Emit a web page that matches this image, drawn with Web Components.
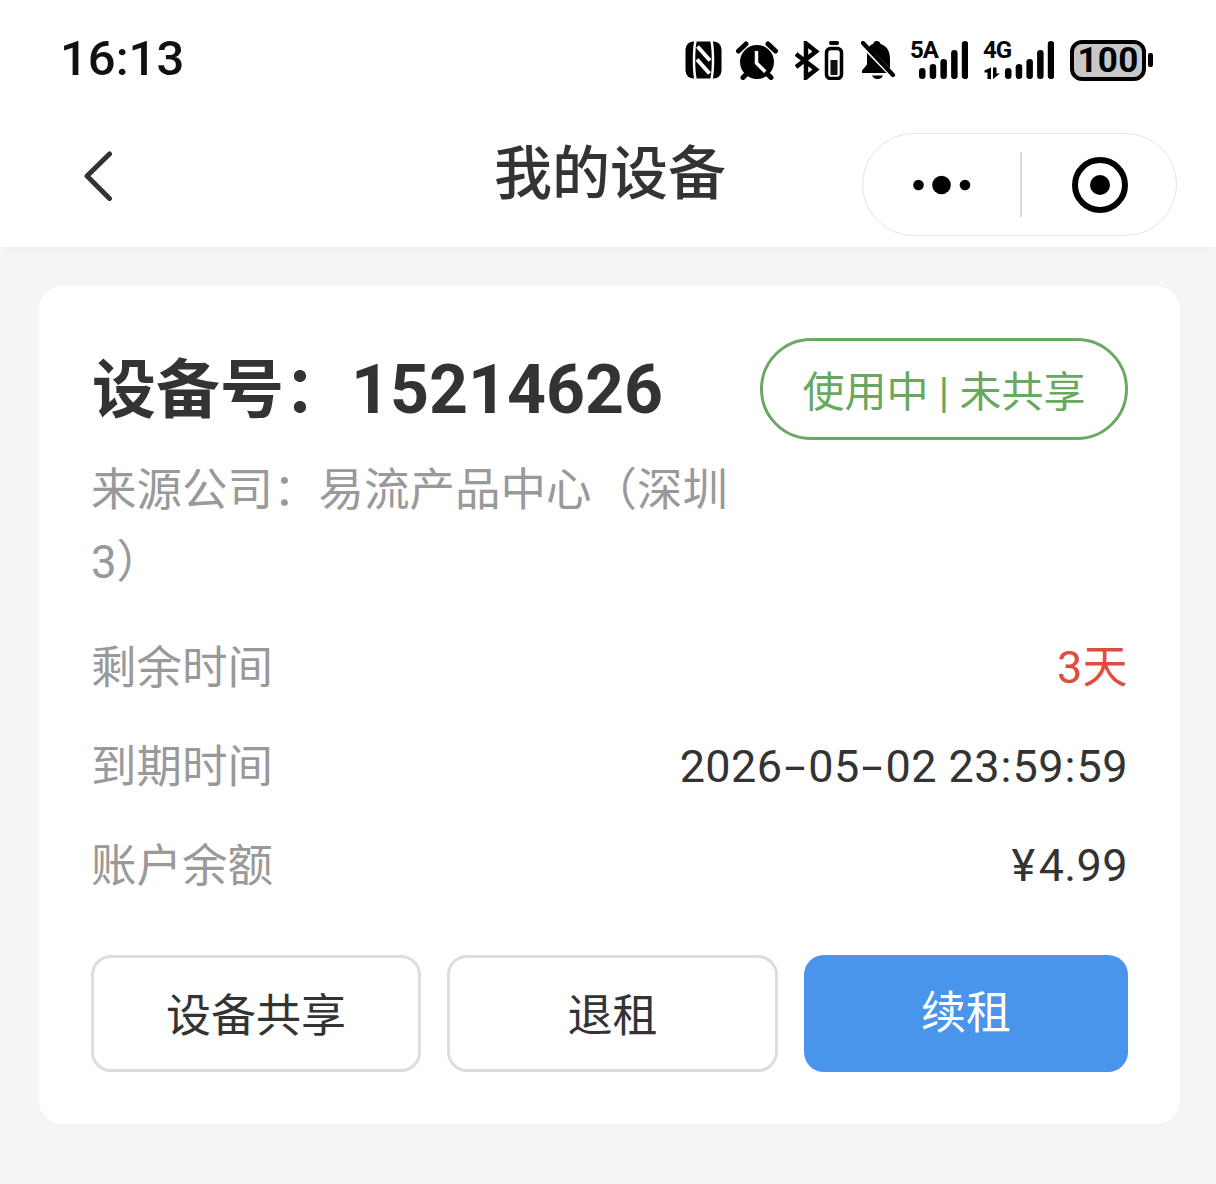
<!DOCTYPE html>
<html lang="zh">
<head>
<meta charset="utf-8">
<title>我的设备</title>
<style>
  html, body { margin: 0; background: #f5f5f5; }
  body { font-family: "Roboto", "Noto Sans CJK SC", sans-serif; color: #333; }
</style>
</head>
<body>
<status-bar time="16:13"></status-bar>
<nav-bar title="我的设备"></nav-bar>
<device-card number="15214626" state="使用中 | 未共享" source="来源公司：易流产品中心（深圳3）">
  <info-row label="剩余时间" value="3天" tone="red"></info-row>
  <info-row label="到期时间" value="2026-05-02 23:59:59"></info-row>
  <info-row label="账户余额" value="¥4.99"></info-row>
  <action-button slot="actions" style="width:330px">设备共享</action-button>
  <action-button slot="actions" style="width:331px">退租</action-button>
  <action-button slot="actions" style="width:324px" primary>续租</action-button>
</device-card>
<script>
customElements.define('signal-icon',
class extends HTMLElement {
  constructor() {
    super();
    this.attachShadow({ mode: 'open' });
  }
  connectedCallback() {
    // tag text above the bars, five bars growing to the right
    const tag = this.getAttribute('tag');
    const arrows = this.hasAttribute('arrows');
    const x = arrows ? 22 : 9;
    const w = arrows ? 71 : 58;
    const bars = [[27, 11], [23, 15], [18, 20], [9, 29], [0, 38]].map((b, i) =>
      `<rect x="${x + i * 10.7}" y="${b[0]}" width="6.500" height="${b[1]}" rx="3.200"/>`).join('');
    this.shadowRoot.innerHTML = `
      <style>
        :host { display: block; position: relative; flex: none; width: ${w}px; height: 38px; }
        svg { display: block; }
        span {
          position: absolute; left: 0; top: -5px;
          font: 700 24px/29px "Roboto", sans-serif;
          letter-spacing: -1px;
          color: #000;
        }
      </style>
      <svg width="${w}" height="38" viewBox="0 0 ${w} 38" fill="#000">
        ${bars}
        ${arrows ? '<path d="M4.500 38V31.500H1.500V29.500L8 26.500V38zM10 26.500H13.500V32.500H17L10 38z"/>' : ''}
      </svg>
      <span>${tag}</span>
    `;
  }
});

customElements.define('status-bar',
class extends HTMLElement {
  constructor() {
    super();
    this.attachShadow({ mode: 'open' });
  }
  connectedCallback() {
    this.shadowRoot.innerHTML = `
      <style>
        :host {
          display: flex;
          align-items: center;
          justify-content: space-between;
          height: 120px;
          box-sizing: border-box;
          padding: 0 63px 0 60px;
          background: #fff;
          color: #111;
        }
        .time { font: 500 49px/60px "Roboto", sans-serif; color: #111; margin-top: -3px; }
        .icons { display: flex; align-items: center; }
        svg { display: block; flex: none; }
        .batt {
          box-sizing: border-box;
          width: 76px; height: 41px;
          margin-left: 16px;
          border: 4px solid #000;
          border-radius: 12px;
          background: #c8c8c8;
          font: 700 35px/33px "Roboto", sans-serif;
          letter-spacing: .3px;
          text-align: center;
          color: #000;
        }
        .nub { width: 5px; height: 14px; margin-left: 2px; background: #000; border-radius: 2px; }
      </style>
      <div class="time">${this.getAttribute('time')}</div>
      <div class="icons">
        <svg width="37" height="38" viewBox="0 0 37 38">
          <rect x=".5" y=".5" width="36" height="37" rx="8" fill="#000"/>
          <path d="M10.500 0C8.500 9 8.500 29 10.500 38M26.500 0C28.500 9 28.500 29 26.500 38" fill="none" stroke="#fff" stroke-width="2.500"/>
          <path d="M12.500 5.500 25 19.500M12 18.500 24.500 32.500" fill="none" stroke="#fff" stroke-width="4"/>
        </svg>
        <svg width="43" height="40" viewBox="0 0 43 40" style="margin-left:14px">
          <circle cx="21" cy="22" r="17" fill="#000"/>
          <path d="M20.500 11v12l9 9" fill="none" stroke="#fff" stroke-width="3.500"/>
          <path d="M2.500 11 10 4M39.500 11 32 4M7 37.500l4-4M35 37.500l-4-4" stroke="#000" stroke-width="5" stroke-linecap="round"/>
        </svg>
        <svg width="49" height="39" viewBox="0 0 49 39" style="margin-left:16px">
          <path d="M1 26 21 10.500 11 2.500V36.500L21 28.500 1 13" fill="none" stroke="#000" stroke-width="4.500"/>
          <rect x="31.500" y="7.500" width="15" height="30" rx="4" fill="none" stroke="#000" stroke-width="3.500"/>
          <rect x="34" y="0" width="10" height="4" rx="1.800" fill="#000"/>
          <rect x="35.500" y="19" width="7" height="15" fill="#111"/>
        </svg>
        <svg width="35" height="38" viewBox="0 0 35 38" style="margin-left:17px">
          <path d="M15.500 0C13.500 0 12.800 1 12.300 2.800 10.500 3.500 9 4.500 8 6L29 27.500V19C29 11 27 5.500 19.500 3 19 1 18 0 15.500 0zM6 12V23.500L1 29.500V32H25.500z" fill="#000"/>
          <path d="M11 34.500H22C21 37 19 38 16.500 38S12 37 11 34.500z" fill="#000"/>
          <path d="M2 2 32 34" stroke="#000" stroke-width="4.200" stroke-linecap="round"/>
        </svg>
        <signal-icon tag="5A" style="margin-left:14px"></signal-icon>
        <signal-icon tag="4G" arrows style="margin-left:15px"></signal-icon>
        <div class="batt">100</div>
        <div class="nub"></div>
      </div>
    `;
  }
});

customElements.define('nav-bar',
class extends HTMLElement {
  constructor() {
    super();
    this.attachShadow({ mode: 'open' });
  }
  connectedCallback() {
    this.shadowRoot.innerHTML = `
      <style>
        :host {
          display: grid;
          grid-template-columns: 1fr auto 1fr;
          align-items: center;
          height: 127px;
          box-sizing: border-box;
          padding: 0 39px 13px 84px;
          background: #fff;
          box-shadow: 0 6px 8px -4px rgba(0,0,0,.04);
          position: relative;
        }
        svg { display: block; }
        h1 {
          margin: 0 0 18px -41px;
          font: 500 58px/70px "Noto Sans CJK SC", sans-serif;
          color: #333;
        }
        .capsule {
          justify-self: end;
          display: flex;
          align-items: center;
          box-sizing: border-box;
          width: 315px; height: 103px;
          margin-top: 13px;
          border: 1.500px solid #e4e4e4;
          border-radius: 52px;
          background: #fff;
        }
        .more { width: 157px; display: flex; justify-content: center; }
        .line { width: 2px; height: 65px; background: #d9d9d9; }
        .target { flex: 1; display: flex; justify-content: center; padding-left: 2px; }
      </style>
      <svg width="30" height="50" viewBox="0 0 30 50" style="margin-top:-5px">
        <path d="M25.500 3 3 25 25.500 47.500" fill="none" stroke="#333" stroke-width="5" stroke-linecap="round" stroke-linejoin="round"/>
      </svg>
      <h1>${this.getAttribute('title')}</h1>
      <div class="capsule">
        <div class="more">
          <svg width="58" height="20" viewBox="0 0 58 20"><circle cx="5.500" cy="10" r="5.300"/><circle cx="28.500" cy="10" r="9.300"/><circle cx="52" cy="10" r="5.300"/></svg>
        </div>
        <div class="line"></div>
        <div class="target">
          <svg width="56" height="56" viewBox="0 0 56 56"><circle cx="28" cy="28" r="25" fill="none" stroke="#000" stroke-width="6"/><circle cx="28" cy="28" r="10"/></svg>
        </div>
      </div>
    `;
  }
});

customElements.define('device-card',
class extends HTMLElement {
  constructor() {
    super();
    this.attachShadow({ mode: 'open' });
  }
  connectedCallback() {
    this.shadowRoot.innerHTML = `
      <style>
        :host {
          display: block;
          box-sizing: border-box;
          width: 1141px;
          margin: 39px 0 0 39px;
          padding: 52px 52px 52px 53px;
          background: #fff;
          border-radius: 24px;
          font-family: "Roboto", "Noto Sans CJK SC", sans-serif;
        }
        .head { display: flex; justify-content: space-between; align-items: flex-start; }
        .num {
          font: 700 64px/92px "Noto Sans CJK SC", sans-serif;
          height: 102px;
          color: #333;
          white-space: nowrap;
        }
        .num b { font: 700 68px/92px "Roboto", sans-serif; margin-left: 3px; position: relative; top: 1px; }
        .state {
          box-sizing: border-box;
          height: 102px;
          padding: 0 39.500px;
          border: 3px solid #6aa863;
          border-radius: 51px;
          font-size: 42px;
          line-height: 104px;
          color: #68a861;
          white-space: nowrap;
        }
        .source {
          width: 640px;
          margin-top: 15px;
          font-size: 45.500px;
          line-height: 72px;
          color: #999;
          margin-left: -1px;
        }
        .rows { margin-top: 19px; }
        .actions { display: flex; gap: 26px; margin-top: 40px; margin-left: -1px; }
      </style>
      <div class="head">
        <div class="num">设备号：<b>${this.getAttribute('number')}</b></div>
        <div class="state">${this.getAttribute('state')}</div>
      </div>
      <div class="source">${this.getAttribute('source')}</div>
      <div class="rows"><slot></slot></div>
      <div class="actions"><slot name="actions"></slot></div>
    `;
  }
});

customElements.define('info-row',
class extends HTMLElement {
  constructor() {
    super();
    this.attachShadow({ mode: 'open' });
  }
  connectedCallback() {
    const red = this.getAttribute('tone') === 'red';
    // the separators of the reference font are wider than Roboto's
    const value = this.getAttribute('value')
      .replace(/-/g, '<i class="dash">-</i>')
      .replace(/:/g, '<i class="colon">:</i>')
      .replace('¥', '<i class="yen">¥</i>');
    this.shadowRoot.innerHTML = `
      <style>
        :host {
          display: flex;
          justify-content: space-between;
          align-items: center;
          height: 99px;
          font-size: 45px;
        }
        .label { color: #999; font-size: 45.500px; margin: 0 0 8px -1px; }
        .value { color: ${red ? '#dd4f3d' : '#333'}; letter-spacing: .4px; margin-bottom: ${red ? '8px' : '0'}; }
        i { font-style: normal; display: inline-block; }
        .dash { transform: scaleX(1.700); margin: 0 6.500px; }
        .colon { margin: 0 .7px; }
        .yen { margin-right: 3px; }
      </style>
      <span class="label">${this.getAttribute('label')}</span>
      <span class="value">${value}</span>
    `;
  }
});

customElements.define('action-button',
class extends HTMLElement {
  constructor() {
    super();
    this.attachShadow({ mode: 'open' });
  }
  connectedCallback() {
    const primary = this.hasAttribute('primary');
    this.shadowRoot.innerHTML = `
      <style>
        :host {
          display: flex;
          align-items: center;
          justify-content: center;
          box-sizing: border-box;
          height: 117px;
          border-radius: 20px;
          border: ${primary ? '0' : '3px solid #ddd'};
          background: ${primary ? '#4a95ec' : '#fff'};
          color: ${primary ? '#fff' : '#333'};
          font-size: 45px;
          padding-bottom: ${primary ? '9px' : '2px'};
        }
      </style>
      <slot></slot>
    `;
  }
});
</script>
</body>
</html>
